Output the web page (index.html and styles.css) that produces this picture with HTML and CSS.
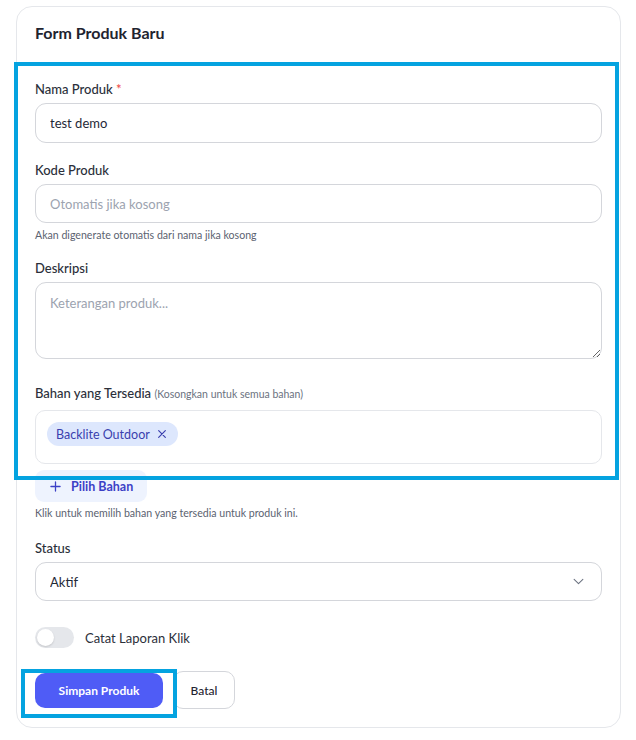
FILE: index.html
```html
<!DOCTYPE html>
<html lang="id">
<head>
    <meta charset="UTF-8">
    <title>Form Produk Baru</title>
    <link rel="stylesheet" href="styles.css">
</head>
<body>
    <div class="card">
        <div class="card-header">
            <h2 class="card-title">Form Produk Baru</h2>
        </div>
        <form class="card-body">
            <div class="field field-name">
                <label class="label">Nama Produk <span class="req">*</span></label>
                <input class="input input-name" type="text" value="test demo">
            </div>
            <div class="field field-kode">
                <label class="label">Kode Produk</label>
                <input class="input" type="text" placeholder="Otomatis jika kosong">
                <p class="hint">Akan digenerate otomatis dari nama jika kosong</p>
            </div>
            <div class="field">
                <label class="label">Deskripsi</label>
                <textarea class="input textarea" placeholder="Keterangan produk..."></textarea>
            </div>
            <div class="field field-bahan">
                <label class="label">Bahan yang Tersedia <span class="label-note">(Kosongkan untuk semua bahan)</span></label>
                <div class="chip-box">
                    <span class="chip">Backlite Outdoor
                        <svg class="chip-x" viewBox="0 0 12 12" width="10" height="10"><path d="M2 2L10 10M10 2L2 10" stroke="currentColor" stroke-width="1.4" stroke-linecap="round"/></svg>
                    </span>
                </div>
                <button type="button" class="btn-soft">
                    <svg viewBox="0 0 12 12" width="11" height="11"><path d="M6 1V11M1 6H11" stroke="currentColor" stroke-width="1.4" stroke-linecap="round"/></svg>
                    Pilih Bahan
                </button>
                <p class="hint">Klik untuk memilih bahan yang tersedia untuk produk ini.</p>
            </div>
            <div class="field">
                <label class="label">Status</label>
                <div class="select-wrap">
                    <select class="input select">
                        <option>Aktif</option>
                        <option>Nonaktif</option>
                    </select>
                    <svg class="chevron" viewBox="0 0 12 8" width="11" height="7"><path d="M1 1.5L6 6.5L11 1.5" fill="none" stroke="currentColor" stroke-width="1.2" stroke-linecap="round" stroke-linejoin="round"/></svg>
                </div>
            </div>
            <label class="toggle-row">
                <span class="toggle"><span class="knob"></span></span>
                <span class="toggle-text">Catat Laporan Klik</span>
            </label>
            <div class="actions">
                <button type="button" class="btn btn-primary">Simpan Produk</button>
                <button type="button" class="btn btn-outline">Batal</button>
            </div>
        </form>
    </div>

    <!-- highlight boxes from the screenshot -->
    <div class="mark mark-fields"></div>
    <div class="mark mark-save"></div>
</body>
</html>
```

FILE: styles.css
```css
body {
    margin: 0;
    background: #fff;
    font-family: Lato, "Noto Sans", sans-serif;
    color: #1f2937;
    position: relative;
}
.card {
    width: 603px;
    margin: 6px 0 0 16px;
    border: 1px solid #e5e7eb;
    border-radius: 16px;
    background: #fff;
}
.card-header {
    padding: 15px 18px 14px;
}
.card-title {
    margin: 0;
    font-size: 16px;
    font-weight: 700;
    color: #1f2430;
    line-height: 22px;
}
.card-body {
    padding: 23px 18px 18px;
    display: flex;
    flex-direction: column;
}
.field {
    display: flex;
    flex-direction: column;
    margin-bottom: 20px;
}
.field-name {
    margin-bottom: 19px;
}
.field-kode {
    margin-bottom: 18px;
}
.label {
    font-size: 13px;
    font-weight: 500;
    line-height: 16px;
    color: #2b2f3a;
    margin-bottom: 6px;
}
.req {
    color: #ef4444;
}
.label-note {
    font-size: 10.5px;
    font-weight: 400;
    color: #6b7280;
}
.input {
    box-sizing: border-box;
    width: 100%;
    height: 39px;
    border: 1px solid #d4d6db;
    border-radius: 11px;
    padding: 0 14px;
    font-family: inherit;
    font-size: 13px;
    color: #1f2937;
    background: #fff;
    outline: none;
}
.input-name {
    height: 40px;
}
.input::placeholder {
    color: #9ca3af;
}
.textarea {
    height: 77px;
    padding: 12px 14px;
    resize: vertical;
    display: block;
    margin-bottom: 6px;
}
.hint {
    margin: 6px 0 0;
    font-size: 10.6px;
    line-height: 13px;
    color: #5b6270;
}
.field-bahan .label {
    margin-bottom: 8px;
}
.chip-box {
    box-sizing: border-box;
    height: 54px;
    border: 1px solid #e5e7eb;
    border-radius: 10px;
    padding: 11px 11px;
}
.chip {
    display: inline-flex;
    align-items: center;
    gap: 7px;
    height: 24px;
    padding: 0 11px 0 9px;
    border-radius: 12px;
    background: #dde7fd;
    color: #3a3fae;
    font-size: 12.5px;
}
.chip-x {
    display: block;
}
.btn-soft {
    align-self: flex-start;
    display: inline-flex;
    align-items: center;
    gap: 10px;
    margin-top: 6px;
    height: 32px;
    padding: 0 14px 0 15px;
    border: none;
    border-radius: 9px;
    background: #eef3fe;
    color: #3c40c6;
    font-family: inherit;
    font-size: 12.5px;
    font-weight: 700;
}
.field-bahan .hint {
    margin-top: 5px;
}
.select-wrap {
    position: relative;
}
.select {
    appearance: none;
    -webkit-appearance: none;
}
.chevron {
    position: absolute;
    right: 18px;
    top: 16px;
    color: #6b7280;
}
.toggle-row {
    display: flex;
    align-items: center;
    gap: 11px;
    margin-top: 6px;
    margin-bottom: 23px;
}
.toggle {
    box-sizing: border-box;
    width: 39px;
    height: 21px;
    border-radius: 11px;
    background: #e5e7eb;
    padding: 2px;
    display: flex;
}
.knob {
    width: 17px;
    height: 17px;
    border-radius: 50%;
    background: #fff;
    box-shadow: 0 1px 2px rgba(0,0,0,0.15);
}
.toggle-text {
    font-size: 13px;
    color: #2b2f3a;
}
.actions {
    display: flex;
    align-items: center;
    gap: 10px;
}
.btn {
    font-family: inherit;
    font-size: 12px;
    font-weight: 700;
    border-radius: 10px;
    cursor: pointer;
}
.btn-primary {
    height: 35px;
    width: 128px;
    border: none;
    background: #4f5cf6;
    color: #fff;
}
.btn-outline {
    height: 38px;
    width: 62px;
    border: 1px solid #d4d6db;
    background: #fff;
    color: #1f2430;
    font-weight: 500;
}
.mark {
    position: absolute;
    border: 4px solid #04a3e0;
    box-sizing: border-box;
    pointer-events: none;
}
.mark-fields {
    left: 14px;
    top: 62px;
    width: 605px;
    height: 418px;
}
.mark-save {
    left: 21px;
    top: 669px;
    width: 156px;
    height: 49px;
}
```
